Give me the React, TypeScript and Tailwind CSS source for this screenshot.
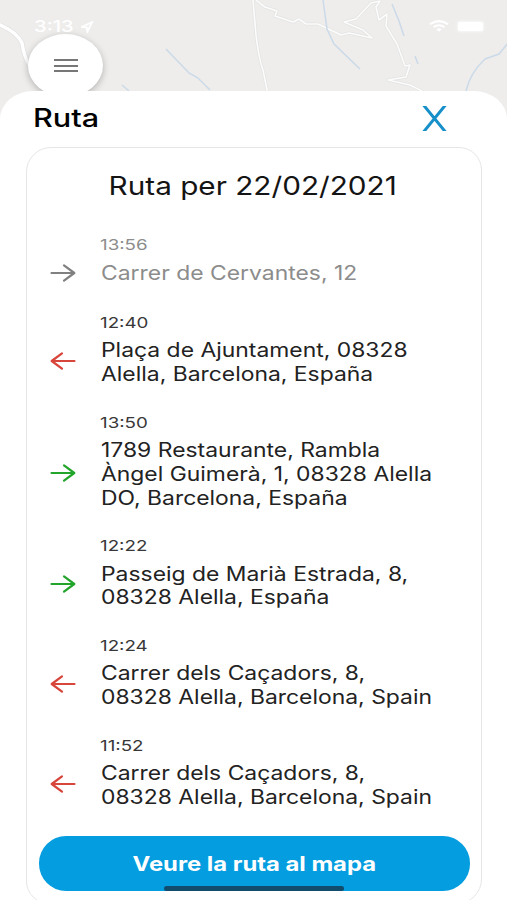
import { clsx } from "clsx"

type Stop = {
  time: string
  lines: string[]
  kind: "done" | "pickup" | "dropoff"
}

const stops: Stop[] = [
  { time: "13:56", lines: ["Carrer de Cervantes, 12"], kind: "done" },
  { time: "12:40", lines: ["Plaça de Ajuntament, 08328", "Alella, Barcelona, España"], kind: "dropoff" },
  {
    time: "13:50",
    lines: ["1789 Restaurante, Rambla", "Àngel Guimerà, 1, 08328 Alella", "DO, Barcelona, España"],
    kind: "pickup",
  },
  { time: "12:22", lines: ["Passeig de Marià Estrada, 8,", "08328 Alella, España"], kind: "pickup" },
  { time: "12:24", lines: ["Carrer dels Caçadors, 8,", "08328 Alella, Barcelona, Spain"], kind: "dropoff" },
  { time: "11:52", lines: ["Carrer dels Caçadors, 8,", "08328 Alella, Barcelona, Spain"], kind: "dropoff" },
]

const arrowColor = {
  done: "text-[#808080]",
  pickup: "text-[#23a52c]",
  dropoff: "text-[#d8453b]",
}

function Arrow({ kind }: { kind: Stop["kind"] }) {
  return (
    <svg
      viewBox="0 0 26 20"
      className={clsx(
        "h-5 w-[26px] shrink-0",
        arrowColor[kind],
        kind === "done" ? "-mt-[2px]" : "-mt-[4px]",
        kind === "dropoff" && "-scale-x-100",
      )}
      fill="none"
      stroke="currentColor"
      strokeWidth="2.2"
      strokeLinecap="round"
      strokeLinejoin="round"
    >
      <path d="M1.5 10H24M14 2.3L24.3 10L14 17.7" />
    </svg>
  )
}

function MapBackground() {
  return (
    <svg viewBox="0 0 507 130" className="absolute inset-x-0 top-0 h-[130px] w-full bg-[#eeedec]" fill="none">
      <g stroke="#e3e3e2" strokeWidth="3" strokeLinejoin="round">
        <path d="M253 0L256 35Q259 60 263 70L268 95" />
        <path d="M256 0L265 7L277 11L275 16L293 22L299 19L306 24L318 24L341 35L349 33L372 38L363 30L344 22L356 19L371 3L380 1L376 7L379 20L387 14L386 26L397 44L405 66L410 65L406 77L388 80L410 85L422 91" />
      </g>
      <g stroke="#fcfcfc" strokeWidth="1.6" strokeLinejoin="round">
        <path d="M253 0L256 35Q259 60 263 70L268 95" />
        <path d="M256 0L265 7L277 11L275 16L293 22L299 19L306 24L318 24L341 35L349 33L372 38L363 30L344 22L356 19L371 3L380 1L376 7L379 20L387 14L386 26L397 44L405 66L410 65L406 77L388 80L410 85L422 91" />
      </g>
      <path d="M-2 24Q17 32 22 43Q24 57 30 66" stroke="#e2e2e2" strokeWidth="5" />
      <path d="M-2 24Q17 32 22 43Q24 57 30 66" stroke="#fff" strokeWidth="3.4" />
      <g stroke="#cbdae8" strokeWidth="1.5">
        <path d="M166 49L189 73L198 78L210 90" />
        <path d="M122 85L129 91" />
        <path d="M323 0L327 29L334 44L360 69" />
        <path d="M392 4L399 21L404 36M415 56L418 64" />
        <path d="M466 91Q470 73 485 59L499 54L508 43" />
      </g>
    </svg>
  )
}

function StatusBar() {
  return (
    <div className="flex h-[34px] items-start justify-between pt-[17px] pr-[24px] pl-[34px] text-white">
      <div className="flex items-center">
        <span className="w-[46px] origin-left scale-x-[1.3] text-[15.5px] leading-[19px] font-medium">3:13</span>
        <svg viewBox="0 0 14 12" className="h-3 w-3.5" fill="none" stroke="currentColor" strokeWidth="1.8">
          <path d="M1.5 6L12 1.3L7.5 10.5L6.8 6.3Z" />
        </svg>
      </div>
      <div className="flex items-center gap-[9px] pt-[3px]">
        <svg viewBox="0 0 20 12" className="h-3 w-5" fill="none" stroke="currentColor" strokeWidth="2.2">
          <path d="M1 4.2Q10 -2 19 4.2M4.5 7.2Q10 3.3 15.5 7.2" />
          <path d="M7.3 9.3Q10 7.3 12.7 9.3L10 11.8Z" fill="currentColor" stroke="none" />
        </svg>
        <div className="h-[9px] w-[25px] rounded-[2px] bg-white shadow-[0_0_3px_1px_rgba(255,255,255,0.6)]" />
      </div>
    </div>
  )
}

function StopRow({ stop }: { stop: Stop }) {
  const done = stop.kind === "done"
  return (
    <li className={clsx(done ? "mb-[27.2px] text-[#8c8c8c]" : "mb-[26.2px] text-[#222]")}>
      <div
        className={clsx(
          "ml-[73.5px] origin-left scale-x-[1.25] text-[15px] leading-5",
          done ? "mb-[7.8px]" : "mb-[6.2px] text-[#383838]",
        )}
      >
        {stop.time}
      </div>
      <div className="flex items-center gap-[25px] pl-[23.4px]">
        <Arrow kind={stop.kind} />
        <div className="origin-left scale-x-[1.174] text-[19.5px] leading-[23.7px] whitespace-nowrap">
          {stop.lines.map((line) => (
            <div key={line}>{line}</div>
          ))}
        </div>
      </div>
    </li>
  )
}

export default function App() {
  return (
    <div className="relative h-[900px] w-[507px] overflow-hidden bg-[#eeedec] font-['Inter',sans-serif]">
      <MapBackground />
      <div className="relative flex h-full flex-col">
        <StatusBar />
        <div className="h-[57px] pl-7">
          <button
            aria-label="Menu"
            className="flex h-[63px] w-[75px] flex-col items-center justify-center gap-[3.6px] rounded-[50%] bg-white shadow-[0_2px_7px_rgba(0,0,0,0.25)]"
          >
            <span className="h-[2px] w-6 bg-[#777]" />
            <span className="h-[2px] w-6 bg-[#777]" />
            <span className="h-[2px] w-6 bg-[#777]" />
          </button>
        </div>

        <section className="relative h-[809px] rounded-t-[33px_28px] bg-white px-[25.5px]">
          <header className="flex h-[56px] items-start justify-between pt-[12px] pr-[34.3px] pl-[7px]">
            <h1 className="origin-left scale-x-[1.225] text-[25px] leading-[30px] font-medium text-black">Ruta</h1>
            <button aria-label="Tancar" className="mt-[3px]">
              <svg viewBox="0 0 25 25" className="h-[25px] w-[25px]" stroke="#178fc9" strokeWidth="3">
                <path d="M1.5 -1L23.5 26M23.5 -1L1.5 26" />
              </svg>
            </button>
          </header>

          <div className="h-[757px] w-[456px] rounded-[25px_23px] border border-[#e6e6e6] bg-white">
            <h2 className="pt-[22px] pr-[1.6px] text-center text-[25.5px] leading-[32px] text-[#141414]">
              <span className="inline-block scale-x-[1.165] whitespace-nowrap">Ruta per 22/02/2021</span>
            </h2>
            <ul className="h-[602px] pt-[32.5px]">
              {stops.map((stop, i) => (
                <StopRow key={i} stop={stop} />
              ))}
            </ul>
            <button className="mt-[32px] ml-[12px] flex h-[55px] w-[431px] items-center justify-center rounded-[27px] bg-[#049ddf] text-[20px] font-bold text-white">
              <span className="scale-x-[1.19] whitespace-nowrap">Veure la ruta al mapa</span>
            </button>
          </div>
        </section>
      </div>
      <div className="absolute top-[886px] left-[164px] h-[5px] w-[180px] rounded-full bg-[#124c6c]" />
    </div>
  )
}
